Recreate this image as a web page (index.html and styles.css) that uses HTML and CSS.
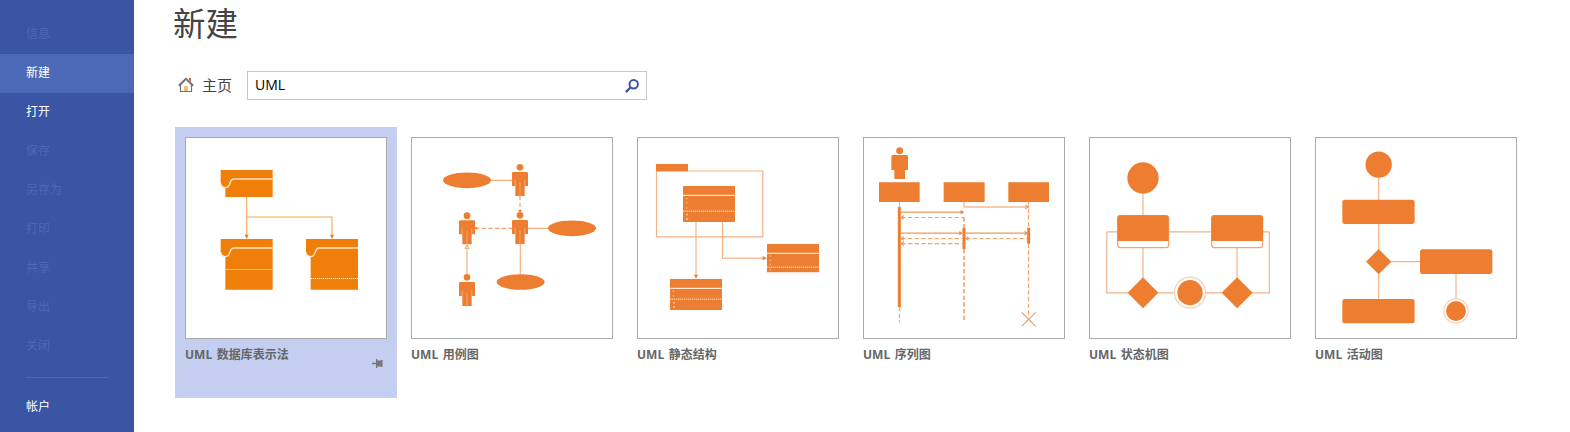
FILE: index.html
```
<!DOCTYPE html>
<html lang="zh-CN">
<head>
<meta charset="utf-8">
<title>新建</title>
<link rel="stylesheet" href="styles.css">
</head>
<body>
<div class="app">
  <nav class="sidebar">
    <a class="nav-item disabled">信息</a>
    <a class="nav-item active">新建</a>
    <a class="nav-item">打开</a>
    <a class="nav-item disabled">保存</a>
    <a class="nav-item disabled">另存为</a>
    <a class="nav-item disabled">打印</a>
    <a class="nav-item disabled">共享</a>
    <a class="nav-item disabled">导出</a>
    <a class="nav-item disabled">关闭</a>
    <div class="divider"></div>
    <a class="nav-item">帐户</a>
  </nav>
  <main class="content">
    <h1 class="title">新建</h1>
    <div class="search-row">
      <svg class="home-icon" width="16" height="16" viewBox="0 0 16 16">
        <path d="M11 1h2v4l-2-2z" fill="#e0563a"/>
        <path d="M2.500 7.500V14.500H13.500V7.500" fill="#fff" stroke="#737373" stroke-width="1.200"/>
        <rect x="6" y="9" width="4" height="5" fill="#ecc27c"/>
        <path d="M.8 8.800L8 1.800L15.200 8.800" fill="none" stroke="#737373" stroke-width="2"/>
      </svg>
      <span class="home-label">主页</span>
      <div class="search-box">
        <span class="query">UML</span>
        <svg class="search-icon" width="14" height="14" viewBox="0 0 14 14">
          <circle cx="8.700" cy="5.200" r="4.200" fill="none" stroke="#3955a3" stroke-width="2"/>
          <path d="M5.700 8.200L.8 13.100" stroke="#3955a3" stroke-width="2.200"/>
        </svg>
      </div>
    </div>
    <div class="cards">
      <section class="card selected">
        <svg class="thumb database" viewBox="48 54 600 600">
          <defs>
            <g id="folder">
              <path class="shape" d="M0 0H156V152H14V52Q0 50 0 38Z"/>
              <path class="cut" d="M0 40Q4 53 14 53C34 53 22 27 40 27H156"/>
            </g>
          </defs>
          <path class="line" d="M230 230V345M230 291H486V345"/>
          <path class="shape" d="M224 344H236L230 357ZM480 344H492L486 357Z"/>
          <path class="shape" d="M152 150H308V231H166V202Q152 200 152 188Z"/>
          <path class="cut" d="M152 190Q156 203 166 203C186 203 174 177 192 177H308"/>
          <use href="#folder" x="152" y="357"/>
          <use href="#folder" x="408" y="357"/>
          <path class="dots" d="M166 448.500H308M422 475.500H564"/>
        </svg>
        <div class="label">UML 数据库表示法</div>
        <svg class="pin" width="11" height="9" viewBox="0 0 11 9"><path d="M0 3.700h4V0h1.300v1.500H9V1h1.500v7H9v-.5H5.300V9H4V5.300H0z" fill="#777"/></svg>
      </section>
      <section class="card">
        <svg class="thumb" viewBox="21 24 600 600">
          <defs>
            <g id="person">
              <circle class="shape" cx="24" cy="10" r="10"/>
              <path class="shape" d="M4 24H44Q48 24 48 28V66H38V96H10V66H0V28Q0 24 4 24Z"/>
              <path class="seam" d="M9.500 48V66M38.500 48V66M24 56V96"/>
            </g>
          </defs>
          <path class="line" d="M256 151H322M368 295H432M346 342V434M186 354V434"/>
          <path class="dashed" d="M345 198V244M210 295H322"/>
          <path class="shape" d="M339 240H351L345 248ZM216 290V300L207 295Z"/>
          <use href="#person" x="321" y="102"/>
          <use href="#person" x="321" y="246"/>
          <use href="#person" x="162" y="247"/>
          <use href="#person" x="162" y="432"/>
          <path class="hollow" d="M186 345L191 355H181Z"/>
          <ellipse class="shape" cx="186" cy="151" rx="72" ry="23.500"/>
          <ellipse class="shape" cx="501" cy="295" rx="72" ry="23.500"/>
          <ellipse class="shape" cx="347" cy="456" rx="72" ry="23.500"/>
        </svg>
        <div class="label">UML 用例图</div>
      </section>
      <section class="card">
        <svg class="thumb" viewBox="24 24 600 600">
          <path class="line" d="M79.500 123H398.500V320.500H79.500ZM198 276V436M277.500 276V384.500H402"/>
          <path class="shape" d="M78 102H174V124H78ZM159 168H315V276H159ZM411 342H567V427H411ZM120 447H276V540H120Z"/>
          <path class="shape" d="M192 434H204L198 447ZM398 378V391L411 384.500Z"/>
          <path class="cut" d="M159 196H315M411 370H567M120 475H276"/>
          <path class="dots" d="M159 243.500H315M411 411.500H567M120 507.500H276"/>
          <path class="bullets" d="M168 205.500h4M168 219h4M168 234h4M419 378h4M419 391h4M419 403h4M419 420h4M128 484h4M128 498h4"/>
          <path class="bullets wide" d="M168 254h6M168 267h6M129 518h6M129 531h6"/>
        </svg>
        <div class="label">UML 静态结构</div>
      </section>
      <section class="card">
        <svg class="thumb" viewBox="24 24 600 600">
          <circle class="shape" cx="131" cy="62" r="10.500"/>
          <path class="shape" d="M111 75H151Q156 75 156 80V120H147V147H115V120H106V80Q106 75 111 75Z"/>
          <path class="shape" d="M69 157H191V216H69ZM263 157H386V216H263ZM457 157H579V216H457Z"/>
          <path class="shape" d="M125.500 231H134.500V531H125.500ZM319.500 293H328.500V357H319.500ZM513.500 293H522.500V341H513.500Z"/>
          <path class="line" d="M130.500 216V231M324 216V231M517.500 216V231"/>
          <path class="line strong" d="M324 231H516M134 246.500H316M134 309.500H313M328 309.500H512"/>
          <path class="dashed" d="M136 262.500H324M136 325.500H320M136 341H320M330 325.500H513M130.500 531V577M517.500 236V293M517.500 341V560"/>
          <path class="dashed wide" d="M324 262V293M324 357V577"/>
          <path class="shape" d="M314 240L325 246.500L314 253ZM310 303L320 309.500L310 316Z"/>
          <path class="arrow" d="M508 226L517 231L508 236M505 304L514 309.500L505 315M144 257L135 262.500L144 268M144 320L135 325.500L144 331M144 335.500L135 341L144 346.500M338 320L329 325.500L338 331"/>
          <path class="cross" d="M497 547L539 589M539 547L497 589"/>
        </svg>
        <div class="label">UML 序列图</div>
      </section>
      <section class="card">
        <svg class="thumb" viewBox="24 24 600 600">
          <path class="line" d="M183 190V257M183 353V443M465 353V443M260 305.500H389M107 305.500H77Q74.500 305.500 74.500 308V488.500H138M228 488.500H278M368 488.500H420M542 305.500H559Q562 305.500 562 308V488.500H510"/>
          <circle class="shape" cx="183" cy="144" r="47"/>
          <rect class="outline" x="107" y="257" width="153" height="96" rx="8"/>
          <rect class="outline" x="389" y="257" width="153" height="96" rx="8"/>
          <path class="shape" d="M106 333V265Q106 256 115 256H251Q260 256 260 265V333ZM388 333V265Q388 256 397 256H534Q543 256 543 265V333Z"/>
          <path class="shape" d="M183 442L229 488.500L183 535L137 488.500ZM465.500 442L512 488.500L465.500 535L419 488.500Z"/>
          <circle class="ring" cx="324" cy="488" r="46.500"/>
          <circle class="shape" cx="324" cy="488" r="38"/>
        </svg>
        <div class="label">UML 状态机图</div>
      </section>
      <section class="card">
        <svg class="thumb" viewBox="27 24 600 600">
          <path class="line" d="M215 143V210M215 281V358M215 431V508M250 395H340M447 431V507"/>
          <circle class="shape" cx="215" cy="104" r="39.500"/>
          <rect class="shape" x="106" y="209" width="217" height="73" rx="8"/>
          <rect class="shape" x="339" y="358" width="217" height="74" rx="8"/>
          <rect class="shape" x="106" y="507" width="217" height="73" rx="8"/>
          <path class="shape" d="M215 357L253 395L215 433L177 395Z"/>
          <circle class="ring" cx="447" cy="543" r="36.500"/>
          <circle class="shape" cx="447" cy="543" r="30"/>
        </svg>
        <div class="label">UML 活动图</div>
      </section>
    </div>
  </main>
</div>
</body>
</html>
```
FILE: styles.css
```
* { box-sizing: border-box; }
body {
  margin: 0;
  overflow: hidden;
  background: #fff;
  font-family: "Open Sans", "Noto Sans CJK SC", sans-serif;
}
.app { display: flex; height: 432px; }
.sidebar {
  flex: none;
  width: 134px;
  padding-top: 15px;
  background: #3955a3;
}
.nav-item {
  display: block;
  height: 39px;
  padding-left: 26px;
  color: #fff;
  font-size: 12px;
  line-height: 38px;
}
.nav-item.active { background: #4c69b7; }
.nav-item.disabled { color: #4c69b7; }
.divider {
  height: 1px;
  margin: 11px 26px 10px;
  background: #4c69b7;
}
.content { flex: none; width: 1436px; padding-left: 41px; }
.title {
  height: 71px;
  margin: 0 0 0 -2px;
  color: #444;
  font-size: 32.5px;
  font-weight: 400;
  line-height: 48px;
}
.search-row { display: flex; align-items: center; height: 29px; }
.home-icon { flex: none; margin: 0 8px 2px 3px; }
.home-label {
  width: 45px;
  color: #444;
  font-size: 15px;
  line-height: 29px;
}
.search-box {
  display: flex;
  align-items: center;
  justify-content: space-between;
  width: 400px;
  height: 29px;
  padding: 0 7px;
  border: 1px solid #c6c6c6;
}
.query { padding-bottom: 2px; color: #000; font-size: 14px; }
.cards { display: flex; gap: 4px; margin-top: 27px; }
.card {
  display: flex;
  flex-direction: column;
  width: 222px;
  height: 271px;
  padding: 10px;
}
.card.selected { background: #c3cef1; }
.thumb {
  flex: none;
  width: 202px;
  height: 202px;
  border: 1px solid #ababab;
  background: #fff;
  --fill: #ed7d31;
}
.thumb.database { --fill: #f07f09; }
.label {
  height: 22px;
  color: #666;
  font-size: 12px;
  font-weight: 700;
  line-height: 32px;
  word-spacing: 1.5px;
}
.pin { align-self: flex-end; margin: -2px 4px 0 0; }
.shape { fill: var(--fill); }
.line, .dashed, .outline, .hollow, .arrow, .cross, .ring {
  fill: none;
  stroke: #f4b183;
  stroke-width: 3.5;
}
.database .line { stroke: #f5ab5b; }
.line.strong, .arrow, .cross { stroke: #f0985c; }
.dashed { stroke: #f2a36d; stroke-dasharray: 13 7; }
.dashed.wide { stroke-width: 5; }
.outline { fill: #fff; stroke: #f2a36d; }
.hollow { fill: #fff; }
.ring { fill: #fff; stroke: #f8cdb0; }
.cut { fill: none; stroke: #fde4cd; stroke-width: 4; }
.seam { stroke: #f6bd96; stroke-width: 2; }
.dots { stroke: #fde4cd; stroke-width: 3; stroke-dasharray: 4 2; }
.bullets { stroke: #f8c8a8; stroke-width: 3; }
.bullets.wide { stroke-width: 4; }
```
